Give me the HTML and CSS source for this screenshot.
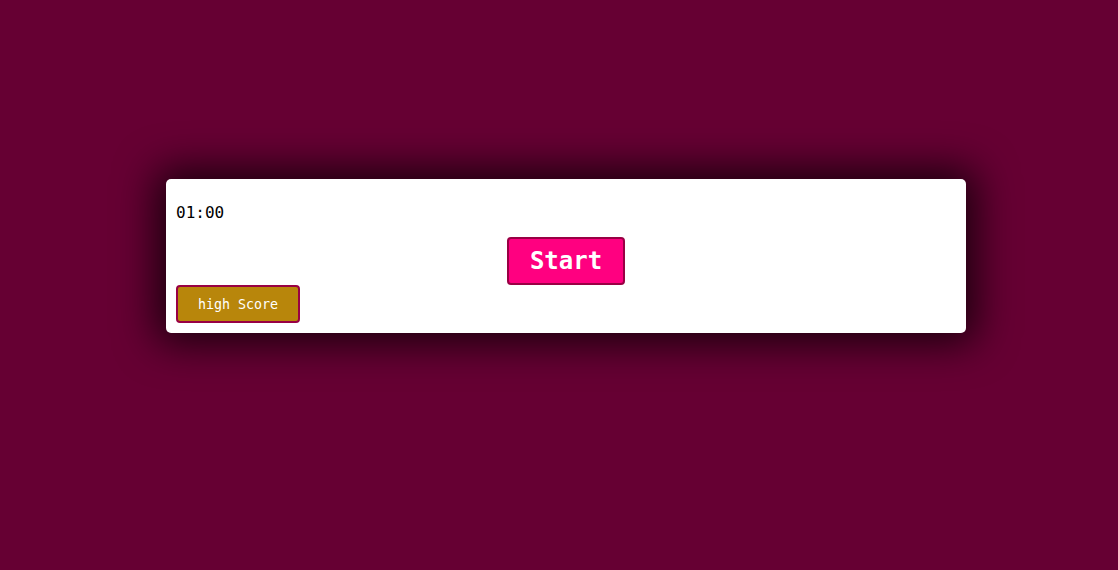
FILE: index.html
```html
<!DOCTYPE html>
<html>
<head>
<meta charset="utf-8">
<link rel="stylesheet" href="styles.css">
</head>
<body>
<div class="stage">
  <div class="card">
    <div class="timer">01:00</div>
    <div class="start-row">
      <button class="start">Start</button>
    </div>
    <button class="high">high Score</button>
  </div>
</div>
</body>
</html>
```
FILE: styles.css
```css
html, body {
  margin: 0;
  padding: 0;
  background: #660033;
  height: 100%;
}
.stage {
  display: flex;
  justify-content: center;
  padding-top: 179px;
  padding-left: 14px;
}
.card {
  width: 800px;
  box-sizing: border-box;
  height: 154px;
  background: #ffffff;
  border-radius: 5px;
  padding: 10px;
  box-shadow: 0 0 40px 10px rgba(0, 0, 0, 0.75);
  display: flex;
  flex-direction: column;
  align-items: flex-start;
}
.timer {
  font-family: "DejaVu Sans Mono", monospace;
  font-size: 16px;
  line-height: 19px;
  color: #000;
  margin-top: 14px;
}
.start-row {
  align-self: stretch;
  display: flex;
  justify-content: center;
  margin-top: 15px;
}
.start {
  width: 118px;
  height: 48px;
  background: #ff0080;
  color: #fff;
  border: 2px solid #990044;
  border-radius: 4px;
  font-family: "DejaVu Sans Mono", monospace;
  font-weight: bold;
  font-size: 24px;
  padding: 0;
}
.high {
  width: 124px;
  height: 38px;
  background: #b8860b;
  color: #fff;
  border: 2px solid #990044;
  border-radius: 4px;
  font-family: "DejaVu Sans Mono", monospace;
  font-size: 13.333px;
  padding: 0;
}
```
